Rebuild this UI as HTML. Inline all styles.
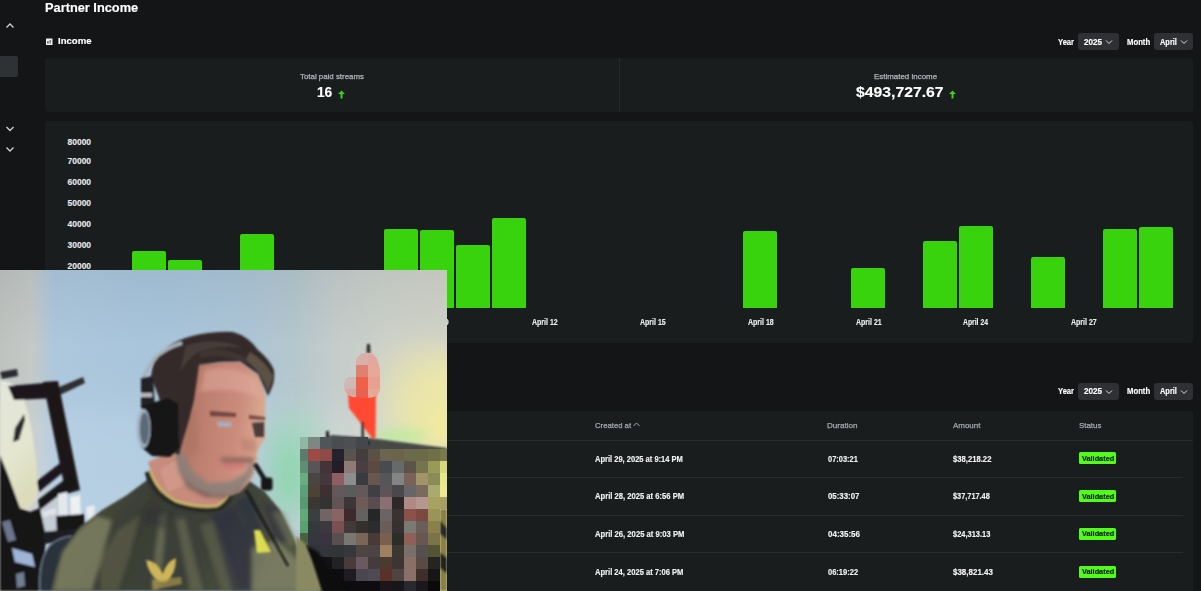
<!DOCTYPE html>
<html><head><meta charset="utf-8">
<style>
*{margin:0;padding:0;box-sizing:border-box}
html,body{width:1201px;height:591px;overflow:hidden;background:#141517;font-family:"Liberation Sans",sans-serif;color:#fff;position:relative}
.abs{position:absolute}
.tx{position:absolute;white-space:nowrap;line-height:1;transform-origin:0 0}
.card{position:absolute;background:#191d1e;border-radius:3px}
.sel{position:absolute;background:#2e3033;border-radius:3px;height:17px}
.bar{position:absolute;background:#38d30c;border-radius:2px 2px 0 0;width:34px}
.badge{position:absolute;left:1078.8px;width:37.3px;height:12px;background:#53fc18;border-radius:1.5px}
.div{position:absolute;height:1px;background:#262b2c}
</style></head><body>
<svg class="abs" style="left:0;top:0" width="40" height="160">
<path d="M6.5 27.5 L10 24 L13.5 27.5" stroke="#cfd2d4" stroke-width="1.3" fill="none"/>
<rect x="-3" y="56" width="21" height="21" rx="2" fill="#2f3235"/>
<path d="M6.5 127 L10 130.5 L13.5 127" stroke="#cfd2d4" stroke-width="1.3" fill="none"/>
<path d="M6.5 147.5 L10 151 L13.5 147.5" stroke="#cfd2d4" stroke-width="1.3" fill="none"/>
</svg>
<svg class="abs" style="left:45px;top:38px" width="9" height="8"><rect x="1" y="0.5" width="6.5" height="6.5" fill="#f0f0f0"/><rect x="2.3" y="3.3" width="1.2" height="2.2" fill="#2a2a2c"/><rect x="4.6" y="2" width="1.1" height="3.5" fill="#4a4a4c"/></svg>
<div class="sel" style="left:1078px;top:33px;width:41px"></div>
<svg class="abs" style="left:1105px;top:39px" width="9" height="6"><path d="M1 1.5 L4 4.5 L7 1.5" stroke="#ddd" stroke-width="1" fill="none"/></svg>
<div class="sel" style="left:1154px;top:33px;width:39px"></div>
<svg class="abs" style="left:1180px;top:39px" width="9" height="6"><path d="M1 1.5 L4 4.5 L7 1.5" stroke="#ddd" stroke-width="1" fill="none"/></svg>
<div class="card" style="left:45px;top:58px;width:1148px;height:54px"></div>
<div class="abs" style="left:619px;top:58px;width:1px;height:54px;background:#25292a"></div>
<svg class="abs" style="left:338px;top:90px" width="8" height="9"><path d="M3.5 0.5 L7 4 L4.5 4 L4.5 8.5 L2.5 8.5 L2.5 4 L0 4 Z" fill="#3ed21a"/></svg>
<svg class="abs" style="left:949px;top:90px" width="8" height="9"><path d="M3.5 0.5 L7 4 L4.5 4 L4.5 8.5 L2.5 8.5 L2.5 4 L0 4 Z" fill="#3ed21a"/></svg>
<div class="card" style="left:45px;top:121px;width:1148px;height:222px"></div>
<div class="bar" style="left:132.00px;top:251px;height:57.4px"></div>
<div class="bar" style="left:167.96px;top:260px;height:48.4px"></div>
<div class="bar" style="left:239.88px;top:234px;height:74.4px"></div>
<div class="bar" style="left:383.72px;top:229px;height:79.4px"></div>
<div class="bar" style="left:419.68px;top:230px;height:78.4px"></div>
<div class="bar" style="left:455.64px;top:245px;height:63.4px"></div>
<div class="bar" style="left:491.60px;top:218px;height:90.4px"></div>
<div class="bar" style="left:743.32px;top:231px;height:77.4px"></div>
<div class="bar" style="left:851.20px;top:268px;height:40.4px"></div>
<div class="bar" style="left:923.12px;top:241px;height:67.4px"></div>
<div class="bar" style="left:959.08px;top:226px;height:82.4px"></div>
<div class="bar" style="left:1031.00px;top:257px;height:51.4px"></div>
<div class="bar" style="left:1102.92px;top:229px;height:79.4px"></div>
<div class="bar" style="left:1138.88px;top:227px;height:81.4px"></div>

<div class="sel" style="left:1078px;top:383px;width:41px"></div>
<svg class="abs" style="left:1105px;top:389px" width="9" height="6"><path d="M1 1.5 L4 4.5 L7 1.5" stroke="#ddd" stroke-width="1" fill="none"/></svg>
<div class="sel" style="left:1154px;top:383px;width:39px"></div>
<svg class="abs" style="left:1180px;top:389px" width="9" height="6"><path d="M1 1.5 L4 4.5 L7 1.5" stroke="#ddd" stroke-width="1" fill="none"/></svg>
<div class="card" style="left:45px;top:411px;width:1148px;height:190px"></div>
<div class="div" style="left:45px;top:440px;width:1148px"></div>
<div class="div" style="left:55px;top:477px;width:1128px"></div>
<div class="div" style="left:55px;top:515px;width:1128px"></div>
<div class="div" style="left:55px;top:552px;width:1128px"></div>
<svg class="abs" style="left:632px;top:421px" width="9" height="7"><path d="M1.5 5 L4.5 2 L7.5 5" stroke="#a9adb1" stroke-width="1" fill="none"/></svg>
<div class="badge" style="top:452.2px"></div>
<div class="badge" style="top:490.2px"></div>
<div class="badge" style="top:528px"></div>
<div class="badge" style="top:565.6px"></div>
<div class="tx" style="left:44.58px;top:1.80px;font-size:12.57px;font-weight:bold;color:#ffffff;-webkit-text-stroke:0.15px #ffffff;transform:scaleX(1.0189)">Partner Income</div>
<div class="tx" style="left:57.80px;top:36.10px;font-size:9.86px;font-weight:bold;color:#ffffff;-webkit-text-stroke:0.15px #ffffff;transform:scaleX(0.9706)">Income</div>
<div class="tx" style="left:1057.60px;top:37.60px;font-size:9.14px;font-weight:bold;color:#ffffff;-webkit-text-stroke:0.15px #ffffff;transform:scaleX(0.8316)">Year</div>
<div class="tx" style="left:1084.00px;top:37.60px;font-size:9.14px;font-weight:bold;color:#ffffff;-webkit-text-stroke:0.15px #ffffff;transform:scaleX(0.8900)">2025</div>
<div class="tx" style="left:1127.10px;top:37.60px;font-size:9.14px;font-weight:bold;color:#ffffff;-webkit-text-stroke:0.15px #ffffff;transform:scaleX(0.8444)">Month</div>
<div class="tx" style="left:1160.20px;top:37.60px;font-size:9.14px;font-weight:bold;color:#ffffff;-webkit-text-stroke:0.15px #ffffff;transform:scaleX(0.8150)">April</div>
<div class="tx" style="left:1057.60px;top:387.40px;font-size:9.14px;font-weight:bold;color:#ffffff;-webkit-text-stroke:0.15px #ffffff;transform:scaleX(0.8316)">Year</div>
<div class="tx" style="left:1084.00px;top:387.40px;font-size:9.14px;font-weight:bold;color:#ffffff;-webkit-text-stroke:0.15px #ffffff;transform:scaleX(0.8900)">2025</div>
<div class="tx" style="left:1127.10px;top:387.40px;font-size:9.14px;font-weight:bold;color:#ffffff;-webkit-text-stroke:0.15px #ffffff;transform:scaleX(0.8444)">Month</div>
<div class="tx" style="left:1160.20px;top:387.40px;font-size:9.14px;font-weight:bold;color:#ffffff;-webkit-text-stroke:0.15px #ffffff;transform:scaleX(0.8150)">April</div>
<div class="tx" style="left:300.00px;top:72.70px;font-size:8.00px;font-weight:normal;color:#b3b7ba;-webkit-text-stroke:0.25px #b3b7ba;transform:scaleX(0.9846)">Total paid streams</div>
<div class="tx" style="left:317.39px;top:84.20px;font-size:15.14px;font-weight:bold;color:#ffffff;-webkit-text-stroke:0.15px #ffffff;transform:scaleX(0.9062)">16</div>
<div class="tx" style="left:874.21px;top:72.70px;font-size:8.00px;font-weight:normal;color:#b3b7ba;-webkit-text-stroke:0.25px #b3b7ba;transform:scaleX(0.9919)">Estimated income</div>
<div class="tx" style="left:856.20px;top:84.20px;font-size:15.14px;font-weight:bold;color:#ffffff;-webkit-text-stroke:0.15px #ffffff;transform:scaleX(1.0417)">$493,727.67</div>
<div class="tx" style="left:67.60px;top:138.40px;font-size:8.43px;font-weight:bold;color:#e6e8ea;-webkit-text-stroke:0.15px #e6e8ea;transform:scaleX(1.0000)">80000</div>
<div class="tx" style="left:67.60px;top:157.00px;font-size:8.43px;font-weight:bold;color:#e6e8ea;-webkit-text-stroke:0.15px #e6e8ea;transform:scaleX(1.0000)">70000</div>
<div class="tx" style="left:67.60px;top:177.70px;font-size:8.43px;font-weight:bold;color:#e6e8ea;-webkit-text-stroke:0.15px #e6e8ea;transform:scaleX(1.0000)">60000</div>
<div class="tx" style="left:67.60px;top:199.00px;font-size:8.43px;font-weight:bold;color:#e6e8ea;-webkit-text-stroke:0.15px #e6e8ea;transform:scaleX(1.0000)">50000</div>
<div class="tx" style="left:67.60px;top:220.00px;font-size:8.43px;font-weight:bold;color:#e6e8ea;-webkit-text-stroke:0.15px #e6e8ea;transform:scaleX(1.0000)">40000</div>
<div class="tx" style="left:67.60px;top:241.30px;font-size:8.43px;font-weight:bold;color:#e6e8ea;-webkit-text-stroke:0.15px #e6e8ea;transform:scaleX(1.0000)">30000</div>
<div class="tx" style="left:67.60px;top:262.00px;font-size:8.43px;font-weight:bold;color:#e6e8ea;-webkit-text-stroke:0.15px #e6e8ea;transform:scaleX(1.0000)">20000</div>
<div class="tx" style="left:211.47px;top:317.10px;font-size:9.43px;font-weight:bold;color:#eceef0;-webkit-text-stroke:0.15px #eceef0;transform:scaleX(0.7414)">April 3</div>
<div class="tx" style="left:319.35px;top:317.10px;font-size:9.43px;font-weight:bold;color:#eceef0;-webkit-text-stroke:0.15px #eceef0;transform:scaleX(0.7414)">April 6</div>
<div class="tx" style="left:427.23px;top:317.10px;font-size:9.43px;font-weight:bold;color:#eceef0;-webkit-text-stroke:0.15px #eceef0;transform:scaleX(0.7414)">April 9</div>
<div class="tx" style="left:531.91px;top:317.10px;font-size:9.43px;font-weight:bold;color:#eceef0;-webkit-text-stroke:0.15px #eceef0;transform:scaleX(0.7441)">April 12</div>
<div class="tx" style="left:639.79px;top:317.10px;font-size:9.43px;font-weight:bold;color:#eceef0;-webkit-text-stroke:0.15px #eceef0;transform:scaleX(0.7441)">April 15</div>
<div class="tx" style="left:747.67px;top:317.10px;font-size:9.43px;font-weight:bold;color:#eceef0;-webkit-text-stroke:0.15px #eceef0;transform:scaleX(0.7441)">April 18</div>
<div class="tx" style="left:855.55px;top:317.10px;font-size:9.43px;font-weight:bold;color:#eceef0;-webkit-text-stroke:0.15px #eceef0;transform:scaleX(0.7441)">April 21</div>
<div class="tx" style="left:963.43px;top:317.10px;font-size:9.43px;font-weight:bold;color:#eceef0;-webkit-text-stroke:0.15px #eceef0;transform:scaleX(0.7229)">April 24</div>
<div class="tx" style="left:1071.31px;top:317.10px;font-size:9.43px;font-weight:bold;color:#eceef0;-webkit-text-stroke:0.15px #eceef0;transform:scaleX(0.7441)">April 27</div>
<div class="tx" style="left:594.50px;top:421.80px;font-size:8.00px;font-weight:normal;color:#a4a9ad;-webkit-text-stroke:0.25px #a4a9ad;transform:scaleX(0.9649)">Created at</div>
<div class="tx" style="left:826.89px;top:421.80px;font-size:8.00px;font-weight:normal;color:#a4a9ad;-webkit-text-stroke:0.25px #a4a9ad;transform:scaleX(1.0103)">Duration</div>
<div class="tx" style="left:953.10px;top:421.80px;font-size:8.00px;font-weight:normal;color:#a4a9ad;-webkit-text-stroke:0.25px #a4a9ad;transform:scaleX(0.9926)">Amount</div>
<div class="tx" style="left:1078.61px;top:421.80px;font-size:8.00px;font-weight:normal;color:#a4a9ad;-webkit-text-stroke:0.25px #a4a9ad;transform:scaleX(0.9864)">Status</div>
<div class="tx" style="left:594.70px;top:454.50px;font-size:8.71px;font-weight:bold;color:#f2f2f2;-webkit-text-stroke:0.15px #f2f2f2;transform:scaleX(0.8644)">April 29, 2025 at 9:14 PM</div>
<div class="tx" style="left:827.60px;top:454.50px;font-size:8.71px;font-weight:bold;color:#f2f2f2;-webkit-text-stroke:0.15px #f2f2f2;transform:scaleX(0.8571)">07:03:21</div>
<div class="tx" style="left:953.10px;top:454.50px;font-size:8.71px;font-weight:bold;color:#f2f2f2;-webkit-text-stroke:0.15px #f2f2f2;transform:scaleX(0.8818)">$38,218.22</div>
<div class="tx" style="left:594.70px;top:492.30px;font-size:8.71px;font-weight:bold;color:#f2f2f2;-webkit-text-stroke:0.15px #f2f2f2;transform:scaleX(0.8772)">April 28, 2025 at 6:56 PM</div>
<div class="tx" style="left:827.60px;top:492.30px;font-size:8.71px;font-weight:bold;color:#f2f2f2;-webkit-text-stroke:0.15px #f2f2f2;transform:scaleX(0.9000)">05:33:07</div>
<div class="tx" style="left:953.10px;top:492.30px;font-size:8.71px;font-weight:bold;color:#f2f2f2;-webkit-text-stroke:0.15px #f2f2f2;transform:scaleX(0.8442)">$37,717.48</div>
<div class="tx" style="left:594.70px;top:529.80px;font-size:8.71px;font-weight:bold;color:#f2f2f2;-webkit-text-stroke:0.15px #f2f2f2;transform:scaleX(0.8802)">April 26, 2025 at 9:03 PM</div>
<div class="tx" style="left:827.60px;top:529.80px;font-size:8.71px;font-weight:bold;color:#f2f2f2;-webkit-text-stroke:0.15px #f2f2f2;transform:scaleX(0.9171)">04:35:56</div>
<div class="tx" style="left:953.10px;top:529.80px;font-size:8.71px;font-weight:bold;color:#f2f2f2;-webkit-text-stroke:0.15px #f2f2f2;transform:scaleX(0.8581)">$24,313.13</div>
<div class="tx" style="left:594.70px;top:567.50px;font-size:8.71px;font-weight:bold;color:#f2f2f2;-webkit-text-stroke:0.15px #f2f2f2;transform:scaleX(0.8703)">April 24, 2025 at 7:06 PM</div>
<div class="tx" style="left:827.60px;top:567.50px;font-size:8.71px;font-weight:bold;color:#f2f2f2;-webkit-text-stroke:0.15px #f2f2f2;transform:scaleX(0.8629)">06:19:22</div>
<div class="tx" style="left:953.10px;top:567.50px;font-size:8.71px;font-weight:bold;color:#f2f2f2;-webkit-text-stroke:0.15px #f2f2f2;transform:scaleX(0.9163)">$38,821.43</div>
<div class="tx" style="left:1081.60px;top:454.80px;font-size:7.57px;font-weight:bold;color:#0a1a06;-webkit-text-stroke:0.15px #0a1a06;transform:scaleX(0.9697)">Validated</div>
<div class="tx" style="left:1081.60px;top:492.70px;font-size:7.57px;font-weight:bold;color:#0a1a06;-webkit-text-stroke:0.15px #0a1a06;transform:scaleX(0.9697)">Validated</div>
<div class="tx" style="left:1081.60px;top:530.40px;font-size:7.57px;font-weight:bold;color:#0a1a06;-webkit-text-stroke:0.15px #0a1a06;transform:scaleX(0.9697)">Validated</div>
<div class="tx" style="left:1081.60px;top:568.10px;font-size:7.57px;font-weight:bold;color:#0a1a06;-webkit-text-stroke:0.15px #0a1a06;transform:scaleX(0.9697)">Validated</div>
<div id="cam" class="abs" style="left:0;top:270px;width:447px;height:321px;background:#c9d3d6;overflow:hidden"><svg width="447" height="321" viewBox="0 270 447 321" style="position:absolute;left:0;top:0;display:block">
<defs>
<filter id="bl" x="-10%" y="-10%" width="120%" height="120%"><feGaussianBlur stdDeviation="1.1"/></filter>
<filter id="bl2" x="-20%" y="-20%" width="140%" height="140%"><feGaussianBlur stdDeviation="2"/></filter>
<filter id="bl6" x="-50%" y="-50%" width="200%" height="200%"><feGaussianBlur stdDeviation="6"/></filter>
<filter id="bl15" x="-80%" y="-80%" width="260%" height="260%"><feGaussianBlur stdDeviation="15"/></filter>
<linearGradient id="wall" x1="0" y1="0" x2="1" y2="0">
 <stop offset="0" stop-color="#c2c6c2"/><stop offset="0.07" stop-color="#c8ccca"/><stop offset="0.125" stop-color="#b0cae0"/>
 <stop offset="0.35" stop-color="#abc8de"/><stop offset="0.55" stop-color="#afc8da"/><stop offset="0.66" stop-color="#b8cad0"/><stop offset="0.75" stop-color="#c8d0ce"/><stop offset="0.86" stop-color="#d0d4cc"/><stop offset="1" stop-color="#d4d6ca"/>
</linearGradient>
<linearGradient id="vshade" x1="0" y1="0" x2="0" y2="1">
 <stop offset="0" stop-color="#304050" stop-opacity="0.10"/><stop offset="0.3" stop-color="#304050" stop-opacity="0.02"/><stop offset="0.6" stop-color="#ffffff" stop-opacity="0.08"/><stop offset="1" stop-color="#ffffff" stop-opacity="0.12"/>
</linearGradient>
<linearGradient id="shirtg" x1="0" y1="0" x2="1" y2="0.3">
 <stop offset="0" stop-color="#545842"/><stop offset="0.4" stop-color="#3a3e36"/><stop offset="0.7" stop-color="#3e4238"/><stop offset="1" stop-color="#505442"/>
</linearGradient>
<linearGradient id="faceg" x1="0" y1="0" x2="1" y2="0.2">
 <stop offset="0" stop-color="#a87060"/><stop offset="0.35" stop-color="#bc7e6e"/><stop offset="0.75" stop-color="#cc8c7c"/><stop offset="1" stop-color="#d8a890"/>
</linearGradient>
<linearGradient id="whiteobj" x1="0" y1="0" x2="0.3" y2="1">
 <stop offset="0" stop-color="#e2e6dc"/><stop offset="0.6" stop-color="#e4e6d0"/><stop offset="1" stop-color="#dcdcbc"/>
</linearGradient>
</defs>
<rect x="0" y="270" width="447" height="321" fill="url(#wall)"/>
<rect x="0" y="270" width="447" height="260" fill="url(#vshade)"/>
<!-- glows -->
<ellipse cx="447" cy="405" rx="50" ry="45" fill="#f8f090" opacity="1" filter="url(#bl15)"/>
<ellipse cx="420" cy="390" rx="45" ry="45" fill="#e4e0b8" opacity="0.6" filter="url(#bl15)"/>
<ellipse cx="290" cy="472" rx="16" ry="48" fill="#80d8a4" opacity="0.95" filter="url(#bl15)"/>
<ellipse cx="300" cy="430" rx="25" ry="20" fill="#a8d8c0" opacity="0.6" filter="url(#bl15)"/>
<ellipse cx="398" cy="436" rx="28" ry="7" fill="#bcec9c" opacity="0.9" filter="url(#bl6)"/>
<g filter="url(#bl)">
<!-- white object -->
<path d="M0 381 Q10 380 16 387 Q24 398 28 412 Q33 435 36 460 Q38 482 37 495 Q34 508 22 510 Q14 506 8 496 L0 470 Z" fill="url(#whiteobj)"/>
<path d="M15 428 L24 414 L25 420 L19 440 L13 442 Z" fill="#2a2c2e"/>
<!-- stand -->
<path d="M0 372 L17 369 L18 376 L2 379 Z" fill="#2c2c30"/>
<path d="M8 386 L56 382 L58 398 L14 400 Z" fill="#1c181c"/>
<path d="M57 388 L83 377 L85 383 L60 395 Z" fill="#2e2e32"/>
<path d="M43 382 L58 381 L80 490 L66 494 Z" fill="#1a1518"/>
<path d="M37 481 L68 457 L71 466 L39 492 Z" fill="#1c181c"/>
<path d="M38 500 L72 474 L74 486 L40 511 Z" fill="#161214"/>
<!-- floor/wall bottom-left -->
<path d="M40 510 L58 496 L60 532 L40 534 Z" fill="#c4ccd4"/>
<path d="M40 512 L56 508 L56 514 L40 518 Z" fill="#dde2e6"/>
<!-- big black frame bottom-left -->
<path d="M0 455 L8 475 L20 508 L30 512 L40 508 L46 536 L42 591 L0 591 Z" fill="#141216"/>
<path d="M2 522 L10 520 L16 540 L8 542 Z" fill="#8090a8" opacity="0.8"/>
<path d="M12 548 L32 554 L35 567 L15 562 Z" fill="#a0b4d8"/>
<path d="M16 574 L24 572 L25 586 L17 588 Z" fill="#8898b0" opacity="0.8"/>
<!-- pedals -->
<path d="M58 494 L67 492 L68 518 L59 520 Z" fill="#e4e8ec"/>
<path d="M70 497 L80 495 L81 522 L71 524 Z" fill="#eef0f2"/>
<path d="M86 507 L95 505 L94 519 L87 521 Z" fill="#e8ecf0"/>
<path d="M56 516 L84 514 L85 532 L57 534 Z" fill="#141416"/>
<path d="M42 532 L80 528 L76 540 L44 544 Z" fill="#1c1c22"/>
<!-- chair back -->
<path d="M39 591 Q38 560 50 545 Q60 537 72 536 L62 591 Z" fill="#2c303a"/>
<path d="M40 591 Q38 560 50 545 Q60 537 72 536" stroke="#7888a0" stroke-width="1.2" fill="none"/>
<!-- shirt base -->
<path d="M51 591 L56 570 L65 550 L80 527 L102 510 L127 495 L147 480 L150 470 L158 490 L180 505 L215 508 L228 498 L240 482 L248 480 L265 492 L280 510 L290 530 L297 545 L306 552 L318 565 L322 585 L324 591 Z" fill="url(#shirtg)"/>
</g>
<g filter="url(#bl2)">
<!-- shirt folds highlights -->
<path d="M53 591 L62 552 L78 531 L96 516 L112 520 L104 550 L92 591 Z" fill="#7e8062" opacity="0.85"/>
<path d="M100 560 L118 530 L140 515 L130 555 L118 591 L100 591 Z" fill="#62644c" opacity="0.6"/>
<path d="M160 515 L167 512 L163 560 L158 591 L152 591 L155 550 Z" fill="#75775a" opacity="0.7"/>
<path d="M176 520 L185 518 L203 591 L190 591 Z" fill="#6e7056" opacity="0.6"/>
<path d="M200 525 L215 520 L240 591 L222 591 Z" fill="#6a6c52" opacity="0.5"/>
<path d="M211 516 L236 505 L262 560 L252 591 L232 591 Z" fill="#2a2c42" opacity="0.55"/>
<path d="M236 500 L252 496 L262 528 L252 540 Z" fill="#2a2c40" opacity="0.6"/>
<path d="M262 500 L278 510 L290 540 L276 545 Z" fill="#2a2c40" opacity="0.5"/>
<path d="M252 548 L276 540 L298 560 L318 591 L252 591 Z" fill="#86886a" opacity="0.75"/>
<path d="M272 512 L284 512 L296 540 L290 548 Z" fill="#7a7c5e" opacity="0.5"/>
<path d="M150 505 L175 512 L165 530 L140 520 Z" fill="#2c2e36" opacity="0.45"/>
</g>
<g filter="url(#bl)">
<!-- cable -->
<path d="M246 490 L288 566" stroke="#101012" stroke-width="2" fill="none"/>
<!-- yellow triangle -->
<path d="M254 530 L260 530 L271 552 L257 553 Z" fill="#dcdc50"/>
<!-- castore logo -->
<path d="M146 560 Q156 560 163 574 Q166 562 176 558 Q176 574 166 582 L160 582 Q148 574 146 560 Z" fill="#cdb65a"/>
<path d="M152 580 L181 577 L182 584 L153 590 Z" fill="#b8a050" opacity="0.6"/>
<!-- right dark beyond shirt -->
<path d="M300 536 L312 548 L322 562 L330 591 L320 591 L308 555 Z" fill="#0c0c0e"/>
<!-- neck -->
<path d="M148 462 L178 448 L192 474 L210 488 L228 494 L230 500 L215 507 L180 504 L158 490 Z" fill="#c88c7c"/>
<path d="M160 470 L176 460 L186 484 L168 492 Z" fill="#d8a090" opacity="0.6"/>
<!-- collar -->
<path d="M147 472 Q153 494 176 505 Q200 512 218 509 Q227 505 232 494" stroke="#2a2c28" stroke-width="5" fill="none"/>
<path d="M150 470 Q156 490 176 501 Q198 508 216 506 Q225 502 229 492" stroke="#c8b868" stroke-width="2.5" fill="none"/>
<!-- face base -->
<path d="M197 364 L220 362 L240 361.5 L258 374 L265.6 395 L265 420 L265 438 L257 451 L257 465 L251 480 L240 492 L224 497 L206 496 L192 486 L180 470 L177 455 L179 435 L182 418 L188 401 Z" fill="url(#faceg)"/>
</g>
<g filter="url(#bl2)">
<path d="M205 370 Q232 364 256 378 L262 398 Q232 386 200 392 Z" fill="#e4b4a4" opacity="0.45"/>
<path d="M182 420 L196 410 L200 450 L186 460 Z" fill="#a87060" opacity="0.45"/>
<!-- beard / stubble -->
<path d="M175 454 L179 473 L194 487.5 L212 494.7 L230 494.7 L245.5 484.6 L252.7 473 L254 459 L251 461.6 L245.5 473 L230 481.8 L208 483 L194 473 L182 451.6 Z" fill="#8a8078" opacity="0.9"/>
<path d="M179 473 L194 487.5 L212 494.7 L230 494.7 L245.5 484.6 L240 492 L225 498 L205 497 L188 488 Z" fill="#5e5048" opacity="0.7"/>
<path d="M219.6 457.3 L254 457 L252 463 L222 463 Z" fill="#8a6458" opacity="0.85"/>
<path d="M222.5 463 L245.5 463 L244 468.8 L224 468.8 Z" fill="#d07878" opacity="0.85"/>
<path d="M240 438 L256 440 L256 452 L242 452 Z" fill="#b87868" opacity="0.5"/>
</g>
<g filter="url(#bl)">
<!-- eyebrows & eyes -->
<path d="M210 411 L236 413 L236 417 L210 416 Z" fill="#5a3a34" opacity="0.8"/>
<path d="M249 415 L265 417 L265 420 L249 419 Z" fill="#5a3a34" opacity="0.8"/>
<path d="M217 421.5 L232 422 L231 427 L218 427 Z" fill="#a8acbc"/>
<path d="M252 423 L264 422 L264 437 L255 437 Z" fill="#3a3032" opacity="0.9"/>
<!-- hair -->
<path d="M151 377 Q152 362 160 353 Q172 341 192 336 Q214 331 233 332 Q248 336 258 350 Q270 360 274 370 Q276 382 268 396 L258 374 L240 361.5 L220 362 L199 365 L194 400 L189 420 L183 440 L179 455 L172 452 L166 420 L158 395 Z" fill="#342c2a"/>
<path d="M186 346 Q214 336 244 348 Q220 344 198 352 Q186 360 180 372 Z" fill="#5e524a" opacity="0.45"/>
<path d="M250 352 Q266 362 273 376 L268 392 Q262 372 246 360 Z" fill="#7a6a58" opacity="0.6"/>
<path d="M200 352 Q225 345 250 360 L246 364 Q222 352 200 358 Z" fill="#54463e" opacity="0.4"/>
<!-- headphones -->
<path d="M143 380 Q148 366 157 356 Q168 347 182 343" stroke="#a8b0b8" stroke-width="3.5" fill="none"/>
<path d="M141 378 L153 376 L155 408 L141 408 Z" fill="#202226"/>
<rect x="141" y="393" width="11" height="4" fill="#b4b8bc"/>
<path d="M142 406 L168 398 L178 404 L179 448 L170 457 L152 456 L140 446 Z" fill="#141416"/>
<ellipse cx="143.5" cy="428.5" rx="7" ry="19.5" fill="#a4b2c0"/>
<ellipse cx="144.5" cy="428.5" rx="4.8" ry="16" fill="#5c6a78"/>
<!-- mic -->
<path d="M253 465 L257 463 L267 479 L263 481 Z" fill="#121214"/>
<rect x="261" y="477.5" width="11.5" height="13" rx="3" fill="#121214"/>
<!-- flag -->
<path d="M348 394 L376 392 L375.5 438 L372 438 L349 408 Z" fill="#ff4a30"/>
<path d="M367 344 L370 344 L370.5 353 L366.5 353 Z" fill="#2a2a2a"/>
<rect x="361.5" y="422" width="2.5" height="20" fill="#2a2a2a"/>
<!-- desk top -->
<path d="M318 441 L332 435 L370 438 L447 448 L447 462 L318 462 Z" fill="#464846"/>
<ellipse cx="363" cy="443" rx="7" ry="3" fill="#1a1a1a"/>
<rect x="326" y="431" width="3" height="9" fill="#222"/>
<!-- right plants strip -->
<path d="M440 509 L447 509 L447 591 L440 591 Z" fill="#8a8040"/>
<path d="M440 520 L447 528 L447 540 L440 534 Z" fill="#2a2a20"/>
<path d="M440 552 L447 558 L447 574 L440 568 Z" fill="#222218"/>
</g>
<!-- flag blob pixelated -->
<clipPath id="blob"><path d="M356 360 Q360 352 368 352 Q378 354 380 370 L380 390 Q378 398 368 398 L352 397 Q344 394 344 385 Q344 377 352 376 L356 376 Z"/></clipPath>
<g clip-path="url(#blob)">
<rect x="356" y="353" width="12" height="12" fill="#d8b0a8"/><rect x="368" y="353" width="12" height="12" fill="#e0a8a0"/>
<rect x="356" y="365" width="12" height="12" fill="#e08070"/><rect x="368" y="365" width="12" height="12" fill="#e8a898"/>
<rect x="344" y="377" width="12" height="12" fill="#d0b8b4"/><rect x="356" y="377" width="12" height="12" fill="#ee6048"/><rect x="368" y="377" width="12" height="12" fill="#e8a090"/>
<rect x="344" y="389" width="12" height="10" fill="#d8a8a0"/><rect x="356" y="389" width="12" height="10" fill="#e86050"/><rect x="368" y="389" width="12" height="10" fill="#e8a898"/>
</g>
<g>
<rect x="300" y="437" width="8" height="12" fill="#8fb8a5"/>
<rect x="308" y="437" width="12" height="12" fill="#7e8883"/>
<rect x="320" y="437" width="12" height="12" fill="#4f5558"/>
<rect x="332" y="437" width="12" height="12" fill="#4a4d50"/>
<rect x="344" y="437" width="12" height="12" fill="#4d4f52"/>
<rect x="356" y="437" width="12" height="12" fill="#45474a"/>
<rect x="300" y="449" width="8" height="12" fill="#5d7a6b"/>
<rect x="308" y="449" width="12" height="12" fill="#9c4a46"/>
<rect x="320" y="449" width="12" height="12" fill="#8e4a47"/>
<rect x="332" y="449" width="12" height="12" fill="#24232b"/>
<rect x="344" y="449" width="12" height="12" fill="#58534f"/>
<rect x="356" y="449" width="12" height="12" fill="#433e3b"/>
<rect x="368" y="449" width="12" height="12" fill="#5a5044"/>
<rect x="380" y="449" width="12" height="12" fill="#6a6450"/>
<rect x="392" y="449" width="12" height="12" fill="#6a6448"/>
<rect x="404" y="449" width="12" height="12" fill="#6c6a4c"/>
<rect x="416" y="449" width="12" height="12" fill="#6c6a48"/>
<rect x="428" y="449" width="12" height="12" fill="#707048"/>
<rect x="440" y="449" width="7" height="12" fill="#787a4a"/>
<rect x="300" y="461" width="8" height="12" fill="#5e8f74"/>
<rect x="308" y="461" width="12" height="12" fill="#575558"/>
<rect x="320" y="461" width="12" height="12" fill="#433438"/>
<rect x="332" y="461" width="12" height="12" fill="#241d27"/>
<rect x="344" y="461" width="12" height="12" fill="#8f7a76"/>
<rect x="356" y="461" width="12" height="12" fill="#4a3e45"/>
<rect x="368" y="461" width="12" height="12" fill="#5c4a42"/>
<rect x="380" y="461" width="12" height="12" fill="#4a4b4e"/>
<rect x="392" y="461" width="12" height="12" fill="#666a6a"/>
<rect x="404" y="461" width="12" height="12" fill="#5c5448"/>
<rect x="416" y="461" width="12" height="12" fill="#76744f"/>
<rect x="428" y="461" width="12" height="12" fill="#9a9a58"/>
<rect x="440" y="461" width="7" height="12" fill="#d8d87a"/>
<rect x="300" y="473" width="8" height="12" fill="#6aab80"/>
<rect x="308" y="473" width="12" height="12" fill="#4a4544"/>
<rect x="320" y="473" width="12" height="12" fill="#44383c"/>
<rect x="332" y="473" width="12" height="12" fill="#8f5e60"/>
<rect x="344" y="473" width="12" height="12" fill="#8c8d8e"/>
<rect x="356" y="473" width="12" height="12" fill="#3a3b3e"/>
<rect x="368" y="473" width="12" height="12" fill="#6a5650"/>
<rect x="380" y="473" width="12" height="12" fill="#545658"/>
<rect x="392" y="473" width="12" height="12" fill="#848484"/>
<rect x="404" y="473" width="12" height="12" fill="#7a6258"/>
<rect x="416" y="473" width="12" height="12" fill="#a09468"/>
<rect x="428" y="473" width="12" height="12" fill="#8a8c58"/>
<rect x="440" y="473" width="7" height="12" fill="#e6e888"/>
<rect x="300" y="485" width="8" height="12" fill="#5e9e78"/>
<rect x="308" y="485" width="12" height="12" fill="#4e4136"/>
<rect x="320" y="485" width="12" height="12" fill="#3d3033"/>
<rect x="332" y="485" width="12" height="12" fill="#65585a"/>
<rect x="344" y="485" width="12" height="12" fill="#5a5c5b"/>
<rect x="356" y="485" width="12" height="12" fill="#64595a"/>
<rect x="368" y="485" width="12" height="12" fill="#3e4044"/>
<rect x="380" y="485" width="12" height="12" fill="#5e5458"/>
<rect x="392" y="485" width="12" height="12" fill="#4a484c"/>
<rect x="404" y="485" width="12" height="12" fill="#666666"/>
<rect x="416" y="485" width="12" height="12" fill="#7a6a5c"/>
<rect x="428" y="485" width="12" height="12" fill="#a8aa70"/>
<rect x="440" y="485" width="7" height="12" fill="#ece890"/>
<rect x="300" y="497" width="8" height="12" fill="#5a9872"/>
<rect x="308" y="497" width="12" height="12" fill="#3b3834"/>
<rect x="320" y="497" width="12" height="12" fill="#353234"/>
<rect x="332" y="497" width="12" height="12" fill="#625455"/>
<rect x="344" y="497" width="12" height="12" fill="#3d3637"/>
<rect x="356" y="497" width="12" height="12" fill="#6e5a56"/>
<rect x="368" y="497" width="12" height="12" fill="#584c4e"/>
<rect x="380" y="497" width="12" height="12" fill="#8a7070"/>
<rect x="392" y="497" width="12" height="12" fill="#2e2828"/>
<rect x="404" y="497" width="12" height="12" fill="#b08a84"/>
<rect x="416" y="497" width="12" height="12" fill="#b49890"/>
<rect x="428" y="497" width="12" height="12" fill="#a8a260"/>
<rect x="440" y="497" width="7" height="12" fill="#a8a060"/>
<rect x="300" y="509" width="8" height="12" fill="#62a878"/>
<rect x="308" y="509" width="12" height="12" fill="#3a4040"/>
<rect x="320" y="509" width="12" height="12" fill="#706464"/>
<rect x="332" y="509" width="12" height="12" fill="#8a6464"/>
<rect x="344" y="509" width="12" height="12" fill="#3e2a2c"/>
<rect x="356" y="509" width="12" height="12" fill="#626260"/>
<rect x="368" y="509" width="12" height="12" fill="#262626"/>
<rect x="380" y="509" width="12" height="12" fill="#6a6464"/>
<rect x="392" y="509" width="12" height="12" fill="#3a3230"/>
<rect x="404" y="509" width="12" height="12" fill="#8a524a"/>
<rect x="416" y="509" width="12" height="12" fill="#7a4a40"/>
<rect x="428" y="509" width="12" height="12" fill="#9a9458"/>
<rect x="300" y="521" width="8" height="12" fill="#5aa070"/>
<rect x="308" y="521" width="12" height="12" fill="#343a3c"/>
<rect x="320" y="521" width="12" height="12" fill="#3c383e"/>
<rect x="332" y="521" width="12" height="12" fill="#7a5050"/>
<rect x="344" y="521" width="12" height="12" fill="#403a3a"/>
<rect x="356" y="521" width="12" height="12" fill="#34302e"/>
<rect x="368" y="521" width="12" height="12" fill="#2a2c2e"/>
<rect x="380" y="521" width="12" height="12" fill="#6a5c58"/>
<rect x="392" y="521" width="12" height="12" fill="#363030"/>
<rect x="404" y="521" width="12" height="12" fill="#7a7a74"/>
<rect x="416" y="521" width="12" height="12" fill="#6a5e5a"/>
<rect x="428" y="521" width="12" height="12" fill="#8a8048"/>
<rect x="300" y="533" width="8" height="12" fill="#4a6040"/>
<rect x="308" y="533" width="12" height="12" fill="#343640"/>
<rect x="320" y="533" width="12" height="12" fill="#3a3440"/>
<rect x="332" y="533" width="12" height="12" fill="#585050"/>
<rect x="344" y="533" width="12" height="12" fill="#7a7672"/>
<rect x="356" y="533" width="12" height="12" fill="#7a6658"/>
<rect x="368" y="533" width="12" height="12" fill="#483a36"/>
<rect x="380" y="533" width="12" height="12" fill="#7a5e4e"/>
<rect x="392" y="533" width="12" height="12" fill="#2c2c28"/>
<rect x="404" y="533" width="12" height="12" fill="#906058"/>
<rect x="416" y="533" width="12" height="12" fill="#6a5650"/>
<rect x="428" y="533" width="12" height="12" fill="#7a7448"/>
<rect x="308" y="545" width="12" height="12" fill="#303438"/>
<rect x="320" y="545" width="12" height="12" fill="#32363a"/>
<rect x="332" y="545" width="12" height="12" fill="#323538"/>
<rect x="344" y="545" width="12" height="12" fill="#34383c"/>
<rect x="356" y="545" width="12" height="12" fill="#4e4442"/>
<rect x="368" y="545" width="12" height="12" fill="#4a4444"/>
<rect x="380" y="545" width="12" height="12" fill="#a08060"/>
<rect x="392" y="545" width="12" height="12" fill="#3a3830"/>
<rect x="404" y="545" width="12" height="12" fill="#7a706a"/>
<rect x="416" y="545" width="12" height="12" fill="#545050"/>
<rect x="428" y="545" width="12" height="12" fill="#545434"/>
<rect x="320" y="557" width="12" height="12" fill="#141216"/>
<rect x="332" y="557" width="12" height="12" fill="#222225"/>
<rect x="344" y="557" width="12" height="12" fill="#4a3a3a"/>
<rect x="356" y="557" width="12" height="12" fill="#6a5a60"/>
<rect x="368" y="557" width="12" height="12" fill="#443c3c"/>
<rect x="380" y="557" width="12" height="12" fill="#4a3a30"/>
<rect x="392" y="557" width="12" height="12" fill="#3e3434"/>
<rect x="404" y="557" width="12" height="12" fill="#8a7064"/>
<rect x="416" y="557" width="12" height="12" fill="#5a4a46"/>
<rect x="428" y="557" width="12" height="12" fill="#242420"/>
<rect x="320" y="569" width="12" height="12" fill="#111114"/>
<rect x="332" y="569" width="12" height="12" fill="#0e0e10"/>
<rect x="344" y="569" width="12" height="12" fill="#1e1c20"/>
<rect x="356" y="569" width="12" height="12" fill="#48484e"/>
<rect x="368" y="569" width="12" height="12" fill="#4e4a54"/>
<rect x="380" y="569" width="12" height="12" fill="#5a3028"/>
<rect x="392" y="569" width="12" height="12" fill="#4e4440"/>
<rect x="404" y="569" width="12" height="12" fill="#8a7068"/>
<rect x="416" y="569" width="12" height="12" fill="#3e2e2c"/>
<rect x="428" y="569" width="12" height="12" fill="#161614"/>
<rect x="320" y="581" width="12" height="12" fill="#0c0c0e"/>
<rect x="332" y="581" width="12" height="12" fill="#0c0c0e"/>
<rect x="344" y="581" width="12" height="12" fill="#0e0c10"/>
<rect x="356" y="581" width="12" height="12" fill="#0e0c10"/>
<rect x="368" y="581" width="12" height="12" fill="#0e0c10"/>
<rect x="380" y="581" width="12" height="12" fill="#1a161a"/>
<rect x="392" y="581" width="12" height="12" fill="#18161a"/>
<rect x="404" y="581" width="12" height="12" fill="#28282e"/>
<rect x="416" y="581" width="12" height="12" fill="#1a181c"/>
<rect x="428" y="581" width="12" height="12" fill="#0a0a0a"/>
</g>
<path d="M296 536 L308 546 L318 570 L324 591 L296 591 Z" fill="#8a8a62" filter="url(#bl)"/>
<path d="M306 545 L318 552 L348 591 L322 591 L312 560 Z" fill="#0c0c0e" filter="url(#bl)"/>
</svg></div>
</body></html>
